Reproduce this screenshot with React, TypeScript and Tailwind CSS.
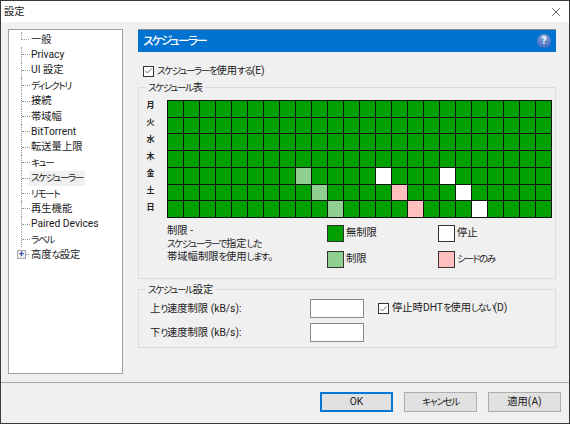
import { Check, X } from "lucide-react";

const uiFont = "[font-family:'Roboto','Noto_Sans_CJK_JP',sans-serif] [font-feature-settings:'palt']";

const treeItems = [
  "一般",
  "Privacy",
  "UI 設定",
  "ディレクトリ",
  "接続",
  "帯域幅",
  "BitTorrent",
  "転送量上限",
  "キュー",
  "スケジューラー",
  "リモート",
  "再生機能",
  "Paired Devices",
  "ラベル",
  "高度な設定",
];

const days = ["月", "火", "水", "木", "金", "土", "日"];

// row-col -> colour, everything else is 無制限
const cellColors: Record<string, string> = {
  "4-8": "limit",
  "5-9": "limit",
  "6-10": "limit",
  "4-13": "stop",
  "4-17": "stop",
  "5-18": "stop",
  "6-19": "stop",
  "5-14": "seed",
  "6-15": "seed",
};

// kana in the original UI font is much narrower than the kanji next to it
function Jp({ text }: { text: string }) {
  return (
    <>
      {text.split(/([ぁ-んァ-ヶー]+)/).map((part, i) =>
        i % 2 === 1 ? (
          <span key={i} className="text-[0.93em] tracking-[-0.14em]">{part}</span>
        ) : (
          <span key={i}>{part}</span>
        ),
      )}
    </>
  );
}

function TreeRow({ label, index }: { label: string; index: number }) {
  const first = index === 0;
  const last = index === treeItems.length - 1;
  const selected = label === "スケジューラー";
  return (
    <div className="flex h-[15.4px] items-stretch">
      <div className={`relative w-[8px] ${first ? "" : "border-l border-dotted border-[#9a9a9a]"} ${last ? "border-l-0" : ""}`}>
        <div className={`h-[8px] w-[8px] border-b border-dotted border-[#9a9a9a] ${first ? "border-l" : ""}`} />
        {last && (
          <div className="absolute left-[-4px] top-[3px] flex h-[9px] w-[9px] items-center justify-center border border-[#a8a8a8] bg-[#eeeef4] text-[9px] leading-none font-bold text-[#3b4fa0]">
            +
          </div>
        )}
      </div>
      <div className={`flex items-center px-[2px] text-[10.3px] leading-none whitespace-nowrap text-[#1a1a1a] ${selected ? "bg-[#f0f0f0]" : ""}`}>
        <Jp text={label} />
      </div>
    </div>
  );
}

function CheckBox() {
  return (
    <span className="flex h-[11px] w-[11px] items-center justify-center border border-[#333] bg-white">
      <Check className="h-[10px] w-[10px] text-[#222]" strokeWidth={1.8} />
    </span>
  );
}

function LegendItem({ color, label }: { color: string; label: string }) {
  return (
    <div className="flex items-center gap-[2px]">
      <span className={`h-[17px] w-[17px] border border-[#333] ${color}`} />
      <span className="text-[10.3px] leading-none text-[#222]"><Jp text={label} /></span>
    </div>
  );
}

function ScheduleGrid() {
  return (
    <div className="grid h-[118px] w-[385px] grid-cols-[repeat(24,1fr)] grid-rows-7 border-t border-l border-[#111] bg-[#111]">
      {days.map((_, row) =>
        Array.from({ length: 24 }).map((_, col) => {
          const kind = cellColors[`${row}-${col}`];
          const cls =
            kind === "limit"
              ? "bg-[#8fcf8f]"
              : kind === "stop"
                ? "bg-white"
                : kind === "seed"
                  ? "bg-[#ffbfbf]"
                  : "bg-[#00a000]";
          return <div key={`${row}-${col}`} className={`border-r border-b border-[#111] ${cls}`} />;
        }),
      )}
    </div>
  );
}

export default function App() {
  return (
    <div className={`flex h-[424px] w-[570px] flex-col border border-[#3a3a3a] bg-[#f0f0f0] ${uiFont}`}>
      <div className="flex h-[21px] items-center justify-between bg-white pr-[6px] pl-[3px]">
        <span className="text-[10.3px] text-[#222]">設定</span>
        <X className="h-[14px] w-[14px] text-[#222]" strokeWidth={1.2} />
      </div>

      <div className="flex h-[361px] items-start border-b border-[#a8a8a8] pt-[7px] pl-[7px]">
        <div className="h-[345px] w-[115px] border border-[#a0a0a0] bg-white pt-[2px] pl-[12px]">
          {treeItems.map((item, i) => (
            <TreeRow key={item} label={item} index={i} />
          ))}
        </div>

        <div className="ml-[15px] flex w-[418px] flex-col">
          <div className="flex h-[23px] items-center justify-between border-t border-[#8a8a8a] bg-[#0073d1] pr-[5px] pl-[5px]">
            <span className="text-[12.5px] font-medium text-white"><Jp text="スケジューラー" /></span>
            <span className="flex h-[14px] w-[14px] items-center justify-center rounded-full bg-[radial-gradient(circle_at_50%_25%,#8aa8e0,#3a5fb8)] text-[10px] leading-none font-bold text-white">?</span>
          </div>

          <label className="mt-[13px] ml-[5px] flex h-[12px] items-center gap-[3px]">
            <CheckBox />
            <span className="text-[10.3px] leading-none text-[#222]"><Jp text="スケジューラーを使用する(E)" /></span>
          </label>

          <fieldset className="mt-[4px] h-[198px] border border-[#dcdcdc] pl-[11px]">
            <legend className="ml-[-4px] px-[2px] text-[10.3px] leading-[13px] text-[#222]"><Jp text="スケジュール表" /></legend>
            <div className="mt-[6px] flex">
              <div className="mt-[-2px] mr-[8px] ml-[-8px] grid h-[118px] w-[17px] grid-rows-7 text-center text-[8px] font-bold text-[#222]">
                {days.map((d) => (
                  <span key={d} className="flex items-center justify-center">{d}</span>
                ))}
              </div>
              <ScheduleGrid />
            </div>
            <div className="mt-[7px] flex">
              <div className="mt-[-1px] ml-[17px] w-[160px] text-[10.3px] leading-[13px] text-[#222]">
                <p><Jp text="制限 -" /></p>
                <p><Jp text="スケジューラーで指定した" /></p>
                <p><Jp text="帯域幅制限を使用します。" /></p>
              </div>
              <div className="grid grid-cols-[111px_auto] gap-y-[8.5px]">
                <LegendItem color="bg-[#00a000]" label="無制限" />
                <LegendItem color="bg-white" label="停止" />
                <LegendItem color="bg-[#8fcf8f]" label="制限" />
                <LegendItem color="bg-[#ffbfbf]" label="シードのみ" />
              </div>
            </div>
          </fieldset>

          <fieldset className="mt-[4px] h-[65px] border border-[#dcdcdc] pl-[11px]">
            <legend className="ml-[-4px] px-[2px] text-[10.3px] leading-[13px] text-[#222]"><Jp text="スケジュール設定" /></legend>
            <div className="mt-[3px] grid grid-cols-[160px_54px_auto] items-center gap-y-[5px]">
              <span className="pt-[1px] text-[10.3px] text-[#222]"><Jp text="上り速度制限 (kB/s):" /></span>
              <div className="h-[19px] border border-[#8a8a8a] bg-white" />
              <label className="ml-[14px] flex items-center gap-[3px]">
                <CheckBox />
                <span className="text-[10.3px] leading-none text-[#222]"><Jp text="停止時DHTを使用しない(D)" /></span>
              </label>
              <span className="pt-[1px] text-[10.3px] text-[#222]"><Jp text="下り速度制限 (kB/s):" /></span>
              <div className="h-[19px] border border-[#8a8a8a] bg-white" />
            </div>
          </fieldset>
        </div>
      </div>

      <div className="flex flex-1 items-start justify-end gap-[11px] pt-[9px] pr-[8px] text-[10.3px] text-[#222]">
        <button className="h-[20px] w-[73px] border-2 border-[#0078d7] bg-[#e1e1e1]">OK</button>
        <button className="h-[20px] w-[73px] border border-[#adadad] bg-[#e1e1e1]"><Jp text="キャンセル" /></button>
        <button className="h-[20px] w-[73px] border border-[#adadad] bg-[#e1e1e1]"><Jp text="適用(A)" /></button>
      </div>
    </div>
  );
}
